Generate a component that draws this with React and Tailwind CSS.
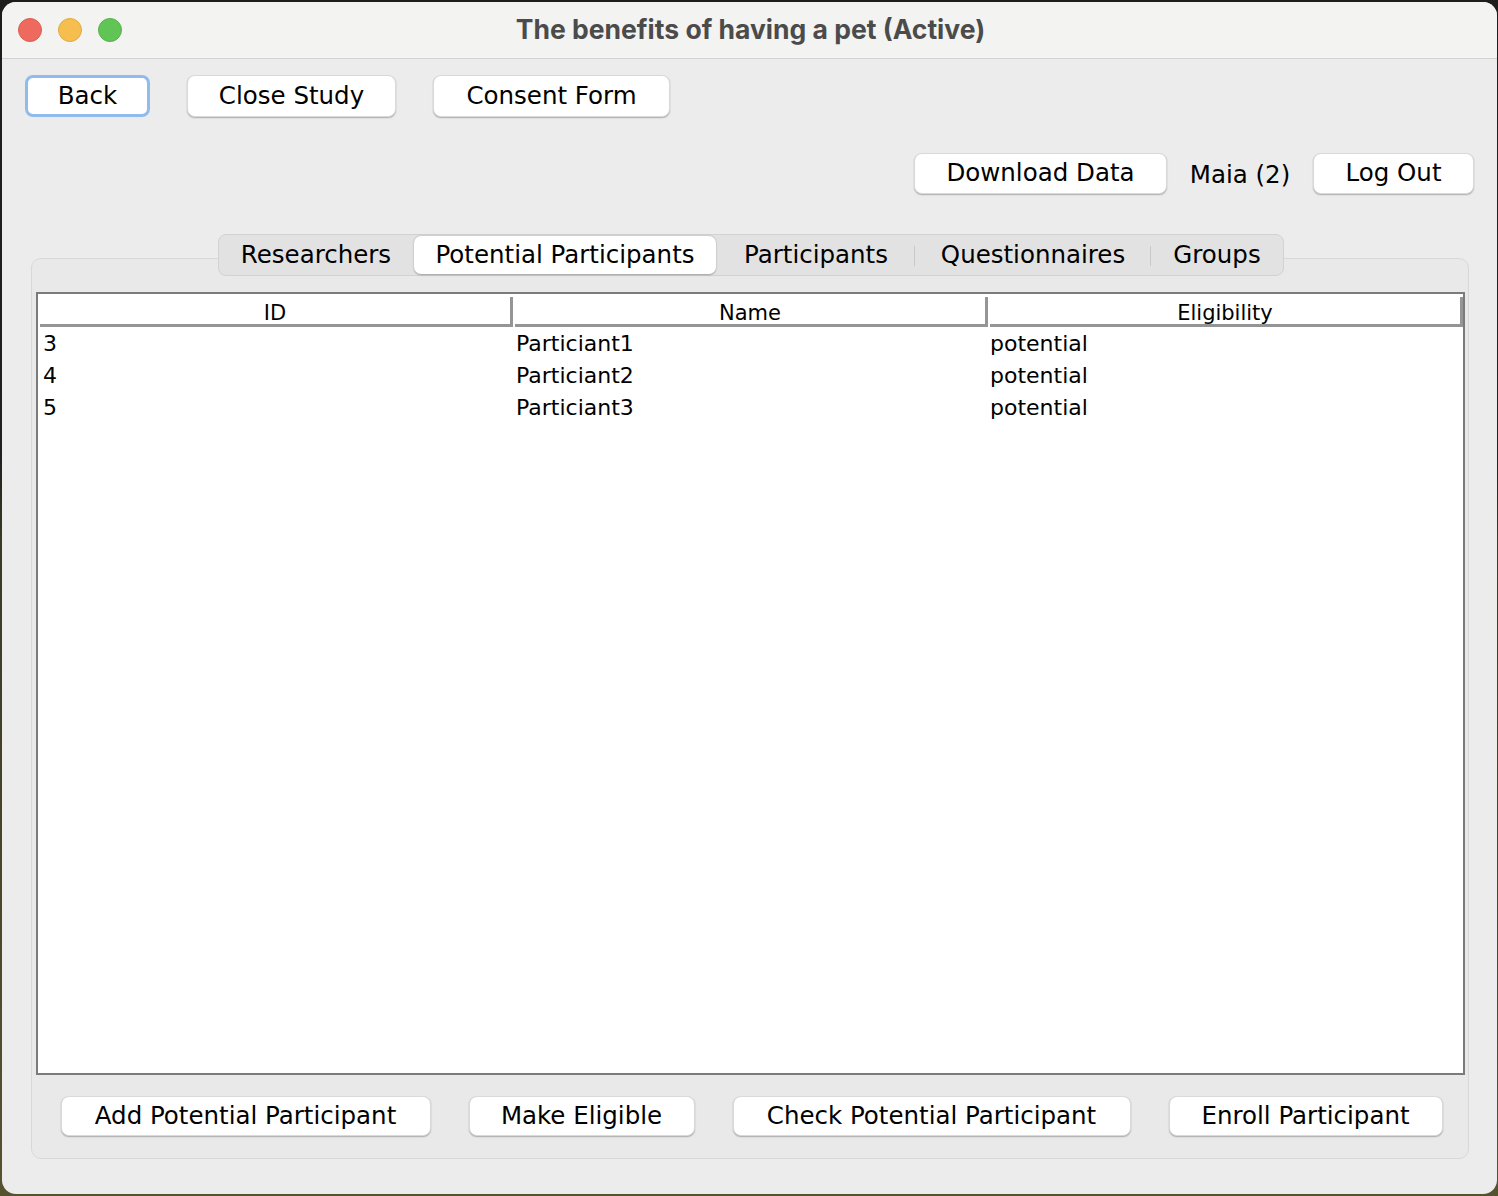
import React from "react";

const F = { fontFamily: '"DejaVu Sans", "Liberation Sans", sans-serif' };

function Btn({ className, children, focus }) {
  return (
    <div
      className={
        "flex items-center justify-center bg-white rounded-[8px] text-black text-[24.5px] leading-none whitespace-nowrap " +
        (focus
          ? "border-[3px] border-[#8fbbef] "
          : "border border-[#d9d9d9] shadow-[0_1px_1.5px_rgba(0,0,0,0.28)] ") +
        className
      }
    >
      {children}
    </div>
  );
}

function Tab({ className, selected, children, sep }) {
  return (
    <div className={"relative flex items-center justify-center h-full " + className}>
      {selected ? (
        <div className="absolute inset-[1px] rounded-[7px] bg-white shadow-[0_0.5px_2px_rgba(0,0,0,0.3)]" />
      ) : null}
      <span className="relative text-[24.5px] leading-none text-black whitespace-nowrap">{children}</span>
      {sep ? <div className="absolute right-0 top-[11px] h-[20px] w-px bg-[#c9c9c9]" /> : null}
    </div>
  );
}

const rows = [
  ["3", "Particiant1", "potential"],
  ["4", "Particiant2", "potential"],
  ["5", "Particiant3", "potential"],
];

export default function App() {
  return (
    <div
      className="w-[1498px] h-[1196px] overflow-hidden bg-[linear-gradient(180deg,#1d1d1d_0%,#1f1f1f_38%,#3a3a26_45%,#55532f_100%)] pt-[2px] pl-[2px] pr-px"
      style={F}
    >
      <div className="w-[1495px] h-[1192px] rounded-[14px] overflow-hidden bg-[#ececec] flex flex-col">
        {/* title bar */}
        <div className="relative h-[57px] shrink-0 bg-[#f3f3f1] border-b border-[#d3d3d3] flex items-center justify-center">
          <div className="absolute left-[16px] top-[16px] flex gap-[16px]">
            <div className="w-[24px] h-[24px] rounded-full bg-[#ee6a5f] border border-[#dc5e53]" />
            <div className="w-[24px] h-[24px] rounded-full bg-[#f5be4f] border border-[#e0ab42]" />
            <div className="w-[24px] h-[24px] rounded-full bg-[#61c555] border border-[#56b14a]" />
          </div>
          <span
            className="text-[26.5px] font-bold text-[#4b4b4b] pl-[2px]"
            style={{ fontFamily: 'Inter, "Liberation Sans", sans-serif' }}
          >
            The benefits of having a pet (Active)
          </span>
        </div>

        {/* content */}
        <div className="flex-1 flex flex-col pt-[16px] pb-[35px]">
          <div className="flex pl-[23px] gap-[37px] h-[42px]">
            <Btn focus className="w-[125px]">Back</Btn>
            <Btn className="w-[209px]">Close Study</Btn>
            <Btn className="w-[237px]">Consent Form</Btn>
          </div>

          <div className="flex justify-end items-center pr-[23px] mt-[36px] h-[41px]">
            <Btn className="w-[253px] h-full">Download Data</Btn>
            <span className="w-[146px] text-center text-[24.5px] text-black leading-none mt-[4px]">Maia (2)</span>
            <Btn className="w-[161px] h-full">Log Out</Btn>
          </div>

          <div className="flex justify-center mt-[40px] mb-[-18px] relative z-10 pl-[3px]">
            <div className="flex h-[42px] rounded-[8px] bg-[#e2e2e2] border border-[#d2d2d2]">
              <Tab className="w-[194px]">Researchers</Tab>
              <Tab className="w-[304px]" selected>Potential Participants</Tab>
              <Tab className="w-[198px]" sep>Participants</Tab>
              <Tab className="w-[236px]" sep>Questionnaires</Tab>
              <Tab className="w-[132px]">Groups</Tab>
            </div>
          </div>

          <div className="flex-1 flex flex-col ml-[29px] mr-[28px] rounded-[10px] bg-[#e9e9e9] border border-[#d8d8d8] pt-[33px] pl-[4px] pr-[3px] pb-[22px]">
            <div className="flex-1 bg-white border-2 border-[#7b7b7b] flex flex-col">
              <div className="grid grid-cols-3 h-[32px]">
                {["ID", "Name", "Eligibility"].map((h) => (
                  <div
                    key={h}
                    className="flex items-center justify-center pt-[6px] border-r-[3px] border-b-[3px] border-[#959595] mt-[3px] ml-[2px] text-[21px] text-black leading-none"
                  >
                    {h}
                  </div>
                ))}
              </div>
              <div className="flex flex-col pt-[2px]">
                {rows.map((r) => (
                  <div key={r[0]} className="grid grid-cols-3 h-[32px] items-center text-[22px] text-black leading-none">
                    <div className="pl-[5px]">{r[0]}</div>
                    <div className="pl-[3px]">{r[1]}</div>
                    <div className="pl-[2px]">{r[2]}</div>
                  </div>
                ))}
              </div>
            </div>

            <div className="flex justify-center gap-[38px] mt-[21px] h-[40px] pl-[2px]">
              <Btn className="w-[370px]">Add Potential Participant</Btn>
              <Btn className="w-[226px]">Make Eligible</Btn>
              <Btn className="w-[398px]">Check Potential Participant</Btn>
              <Btn className="w-[274px]">Enroll Participant</Btn>
            </div>
          </div>
        </div>
      </div>
    </div>
  );
}
